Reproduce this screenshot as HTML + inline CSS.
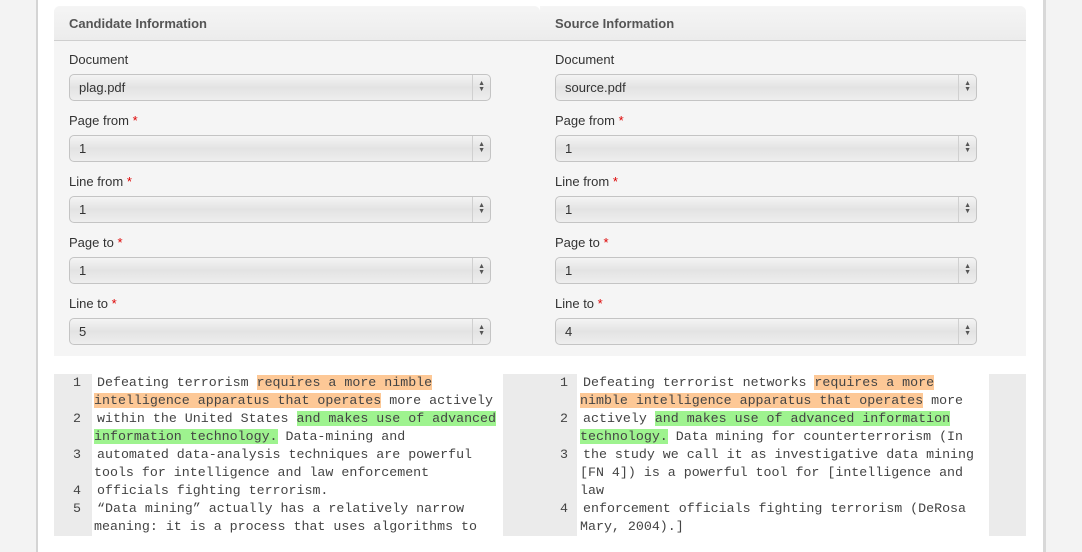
<!DOCTYPE html>
<html><head><style>
*{margin:0;padding:0;box-sizing:border-box}
body{width:1082px;height:552px;overflow:hidden;background:#f3f3f3;font-family:"Liberation Sans",Arial,sans-serif;position:relative}
.page{position:absolute;left:36px;top:0;width:1010px;height:552px;background:#fff;border-left:2px solid #d4d4d4;border-right:3px solid #d8d8d8}
.panel{position:absolute;top:6px;height:350px;background:#f5f5f5}
.hdr{height:35px;border-bottom:1px solid #cfcfcf;background:linear-gradient(#f5f5f5,#ececec);font-weight:bold;font-size:13px;color:#555;padding:10px 0 0 15px;border-radius:6px 6px 0 0}
.lbl{position:absolute;left:15px;font-size:13px;color:#333}
.lbl b{color:#d00;font-weight:normal}
.sel{position:absolute;left:15px;width:422px;height:27px;border:1px solid #c4c4c4;border-radius:5px;background:linear-gradient(#f4f4f4,#e3e3e3 50%,#eeeeee);font-size:13px;color:#333;padding:5px 0 0 9px}
.sel:after{content:"";position:absolute;right:17px;top:0;height:25px;border-left:1px solid #d0d0d0}
.sel i{position:absolute;right:5px;top:6px;font-style:normal;font-size:7px;line-height:6px;color:#555;text-align:center}
.code{position:absolute;top:374px;height:162px;font-family:"Liberation Mono",monospace;font-size:13.3px;line-height:18px;color:#444;white-space:pre}
.code s{text-decoration:none;margin-left:3px}
.gut{position:absolute;top:374px;height:162px;background:#ebebeb}
.n{position:absolute;width:26px;text-align:right;font-family:"Liberation Mono",monospace;font-size:13.3px;line-height:18px;color:#444}
.o{background:#fdc896}.g{background:#9ef38f}
</style></head><body>
<div class="page"></div>
<div class="panel" style="left:54px;width:486px;border-radius:6px 6px 0 0">
<div class="hdr">Candidate Information</div>
<div class="lbl" style="top:46px">Document</div><div class="sel" style="top:68px">plag.pdf<i>▲<br>▼</i></div>
<div class="lbl" style="top:107px">Page from <b>*</b></div><div class="sel" style="top:129px">1<i>▲<br>▼</i></div>
<div class="lbl" style="top:168px">Line from <b>*</b></div><div class="sel" style="top:190px">1<i>▲<br>▼</i></div>
<div class="lbl" style="top:229px">Page to <b>*</b></div><div class="sel" style="top:251px">1<i>▲<br>▼</i></div>
<div class="lbl" style="top:290px">Line to <b>*</b></div><div class="sel" style="top:312px">5<i>▲<br>▼</i></div>
</div>
<div class="panel" style="left:540px;width:486px;border-radius:0 6px 0 0">
<div class="hdr">Source Information</div>
<div class="lbl" style="top:46px">Document</div><div class="sel" style="top:68px">source.pdf<i>▲<br>▼</i></div>
<div class="lbl" style="top:107px">Page from <b>*</b></div><div class="sel" style="top:129px">1<i>▲<br>▼</i></div>
<div class="lbl" style="top:168px">Line from <b>*</b></div><div class="sel" style="top:190px">1<i>▲<br>▼</i></div>
<div class="lbl" style="top:229px">Page to <b>*</b></div><div class="sel" style="top:251px">1<i>▲<br>▼</i></div>
<div class="lbl" style="top:290px">Line to <b>*</b></div><div class="sel" style="top:312px">4<i>▲<br>▼</i></div>
</div>
<div class="gut" style="left:54px;width:38px"></div>
<div class="gut" style="left:503px;width:74px"></div>
<div class="gut" style="left:989px;width:37px"></div>
<div class="n" style="left:55px;top:374px">1</div>
<div class="n" style="left:55px;top:410px">2</div>
<div class="n" style="left:55px;top:446px">3</div>
<div class="n" style="left:55px;top:482px">4</div>
<div class="n" style="left:55px;top:500px">5</div>
<div class="n" style="left:542px;top:374px">1</div>
<div class="n" style="left:542px;top:410px">2</div>
<div class="n" style="left:542px;top:446px">3</div>
<div class="n" style="left:542px;top:500px">4</div>
<div class="code" style="left:94px"><s></s>Defeating terrorism <span class="o">requires a more nimble</span>
<span class="o">intelligence apparatus that operates</span> more actively
<s></s>within the United States <span class="g">and makes use of advanced</span>
<span class="g">information technology.</span> Data-mining and
<s></s>automated data-analysis techniques are powerful
tools for intelligence and law enforcement
<s></s>officials fighting terrorism.
<s></s>“Data mining” actually has a relatively narrow
meaning: it is a process that uses algorithms to</div>
<div class="code" style="left:580px"><s></s>Defeating terrorist networks <span class="o">requires a more</span>
<span class="o">nimble intelligence apparatus that operates</span> more
<s></s>actively <span class="g">and makes use of advanced information</span>
<span class="g">technology.</span> Data mining for counterterrorism (In
<s></s>the study we call it as investigative data mining
[FN 4]) is a powerful tool for [intelligence and
law
<s></s>enforcement officials fighting terrorism (DeRosa
Mary, 2004).]</div>
</body></html>
